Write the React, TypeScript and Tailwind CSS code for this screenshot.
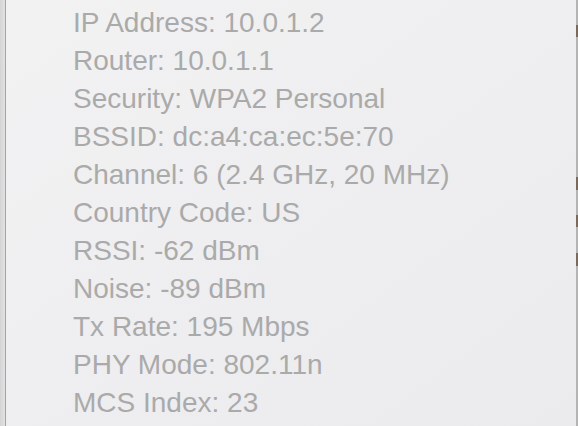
const ROWS = [
  "IP Address: 10.0.1.2",
  "Router: 10.0.1.1",
  "Security: WPA2 Personal",
  "BSSID: dc:a4:ca:ec:5e:70",
  "Channel: 6 (2.4 GHz, 20 MHz)",
  "Country Code: US",
  "RSSI: -62 dBm",
  "Noise: -89 dBm",
  "Tx Rate: 195 Mbps",
  "PHY Mode: 802.11n",
  "MCS Index: 23",
];

export default function App() {
  return (
    <div className="flex h-[426px] w-[578px] overflow-hidden bg-[#ececee]">
      <div className="w-[5px] bg-gradient-to-r from-[#d4d4d4] to-[#e2e2e2]" />
      <div className="w-px bg-[#a4a4a4]" />
      <div className="flex-1 bg-gradient-to-br from-[#f2f2f3] to-[#ebebee] pl-[67px] pt-[4px] font-['Liberation_Sans',Arial,sans-serif] text-[28px] leading-[38px] text-[#aaaaaa]">
        {ROWS.map((row) => (
          <div key={row} className="whitespace-nowrap">
            {row}
          </div>
        ))}
      </div>
      <div className="flex w-[2px] flex-col bg-[#b4b4b4]">
        <div className="h-[25px]" />
        <div className="h-[12px] bg-[#7a6a5e]" />
        <div className="h-[140px]" />
        <div className="h-[13px] bg-[#7a6a5e]" />
        <div className="h-[25px]" />
        <div className="h-[12px] bg-[#7a6a5e]" />
        <div className="h-[26px]" />
        <div className="h-[13px] bg-[#7a6a5e]" />
      </div>
    </div>
  );
}
